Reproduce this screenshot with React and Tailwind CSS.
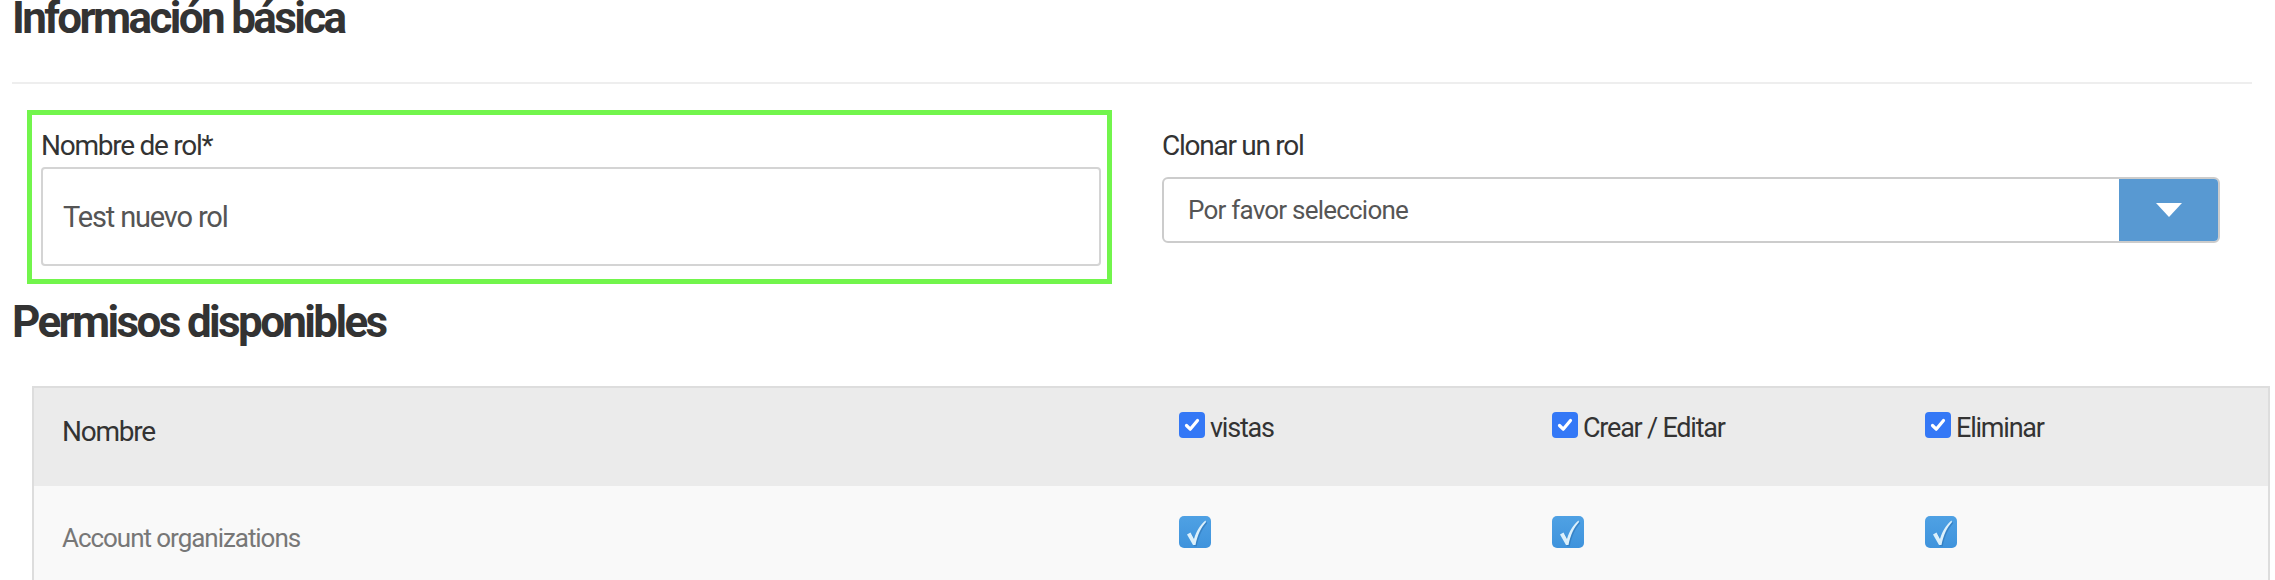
import React from 'react';

// Role editor: basic info + permissions table

const columns = ['vistas', 'Crear / Editar', 'Eliminar'];

function HeaderCheck() {
  return (
    <span className="mt-[1px] flex h-[26px] w-[26px] shrink-0 items-center justify-center rounded-[4px] bg-[#3478f6]">
      <svg viewBox="0 0 20 20" className="h-[20px] w-[20px]">
        <path d="M4.5 10.5 L8.2 14.2 L15.5 5.5" fill="none" stroke="#fff" strokeWidth="3.2" strokeLinecap="round" strokeLinejoin="round" />
      </svg>
    </span>
  );
}

function RowCheck() {
  return (
    <span className="flex h-[32px] w-[32px] items-center justify-center rounded-[5px] bg-gradient-to-b from-[#4fa1e4] to-[#3f93dc]">
      <svg viewBox="0 0 32 32" className="h-[32px] w-[32px]">
        <path d="M8 18.5 L11.5 16.5 L15 23 C17.5 15 21 9 26.5 4.5 L27 6 C22 11.5 18.5 19 16.5 29 L14 29 Z" fill="#2a6fb0" opacity="0.55" transform="translate(1.2 1.2)" />
        <path d="M8 18.5 L11.5 16.5 L15 23 C17.5 15 21 9 26.5 4.5 L27 6 C22 11.5 18.5 19 16.5 29 L14 29 Z" fill="#dcf0fb" />
      </svg>
    </span>
  );
}

export default function App() {
  return (
    <div className="h-[580px] w-full overflow-hidden bg-white font-['Roboto',sans-serif] text-[#333]">
      <div className="pl-[12px]">
        <h3 className="h-[36px] text-[44px] font-bold leading-[36px] tracking-[-0.06em] text-[#333]">Información básica</h3>
        <div className="mr-[23px] mt-[46px] h-[2px] bg-[#eeeeee]" />

        <div className="mt-[26px] flex">
          <div className="ml-[15px] w-[1085px] border-[5px] border-[#72f54c] pb-[13px] pl-[9px] pr-[6px] pt-[14px]">
            <label className="block text-[28px] leading-[34px] tracking-[-0.045em] text-[#333]">Nombre de rol*</label>
            <div className="mt-[4px] flex h-[99px] items-center rounded-[4px] border-2 border-[#d4d4d4] pl-[20px]">
              <span className="pt-[3px] text-[29px] tracking-[-0.04em] text-[#555]">Test nuevo rol</span>
            </div>
          </div>

          <div className="ml-[50px] w-[1058px] pt-[19px]">
            <label className="block text-[28px] leading-[34px] tracking-[-0.045em] text-[#333]">Clonar un rol</label>
            <div className="mt-[14px] flex h-[66px] overflow-hidden rounded-[6px] border-2 border-[#cccccc]">
              <div className="flex flex-1 items-center pl-[24px] text-[26px] tracking-[-0.03em] text-[#555]">Por favor seleccione</div>
              <div className="flex w-[99px] items-center justify-center bg-[#5899d2]">
                <svg viewBox="0 0 26 14" className="h-[14px] w-[26px]">
                  <path d="M0 0 H26 L13 14 Z" fill="#fff" />
                </svg>
              </div>
            </div>
          </div>
        </div>

        <h3 className="mt-[20px] h-[36px] text-[44px] font-bold leading-[36px] tracking-[-0.06em] text-[#333]">Permisos disponibles</h3>
      </div>

      <div className="ml-[32px] mr-[5px] mt-[46px] border-x-2 border-t-2 border-[#dddddd]">
        <div className="grid h-[98px] grid-cols-[1117px_373px_373px_1fr] bg-[#ebebeb]">
          <div className="pl-[28px] pt-[27px] text-[28px] leading-[34px] tracking-[-0.045em] text-[#333]">Nombre</div>
          {columns.map((c) => (
            <div key={c} className="flex items-start gap-[5px] pl-[28px] pt-[23px]">
              <HeaderCheck />
              <span className="text-[27px] leading-[34px] tracking-[-0.045em] text-[#333]">{c}</span>
            </div>
          ))}
        </div>
        <div className="grid h-[120px] grid-cols-[1117px_373px_373px_1fr] bg-[#f9f9f9]">
          <div className="pl-[28px] pt-[35px] text-[26px] leading-[34px] tracking-[-0.04em] text-[#777]">Account organizations</div>
          {columns.map((c) => (
            <div key={c} className="pl-[28px] pt-[30px]">
              <RowCheck />
            </div>
          ))}
        </div>
      </div>
    </div>
  );
}
